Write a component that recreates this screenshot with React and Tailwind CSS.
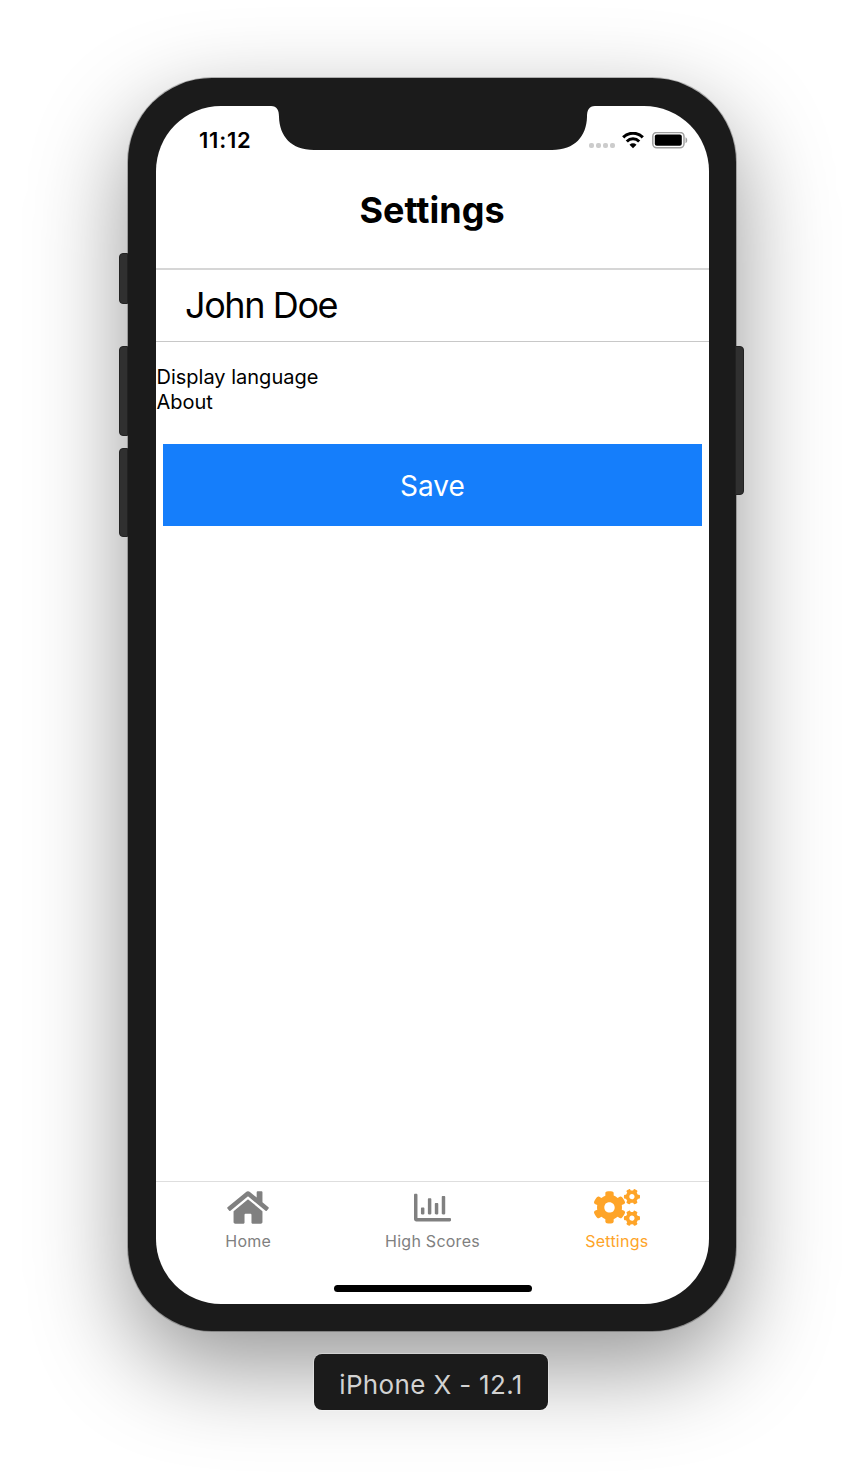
import { FaCogs, FaRegChartBar } from "react-icons/fa";

function HomeIcon({ className }) {
  return (
    <svg viewBox="0 0 576 512" fill="currentColor" className={className}>
      <path d="M488 312.7V456c0 13.3-10.7 24-24 24H348c-6.6 0-12-5.4-12-12V356c0-6.6-5.4-12-12-12h-72c-6.6 0-12 5.4-12 12v112c0 6.6-5.4 12-12 12H112c-13.3 0-24-10.7-24-24V312.7c0-3.6 1.6-7 4.4-9.3l188-154.8c4.4-3.6 10.8-3.6 15.3 0l188 154.8c2.7 2.3 4.3 5.7 4.3 9.3zm83.6-60.9L488 182.9V44.4c0-6.6-5.4-12-12-12h-56c-6.6 0-12 5.4-12 12V117l-89.5-73.7c-17.7-14.6-43.3-14.6-61 0L4.4 251.8c-5.1 4.2-5.8 11.8-1.6 16.9l25.5 31c4.2 5.1 11.8 5.8 16.9 1.6l235.2-193.7c4.4-3.6 10.8-3.6 15.3 0l235.2 193.7c5.1 4.2 12.7 3.5 16.9-1.6l25.5-31c4.2-5.2 3.4-12.7-1.7-16.9z" />
    </svg>
  );
}

function Notch() {
  return (
    <svg viewBox="0 0 324 45" className="absolute -top-px left-[115px] h-[45px] w-[324px]">
      <path
        fill="#1b1b1b"
        d="M0 0H324V1C318 1 316 5 316 12C315.500 31 304 45 281 45H43C20 45 8.500 31 8 12C8 5 6 1 0 1Z"
      />
    </svg>
  );
}

function StatusBar() {
  return (
    <div className="flex h-[68px] items-center justify-between pr-[21px] pl-[43px]">
      <span className="text-[22px] leading-none font-semibold tracking-[0.8px]">11:12</span>
      <div className="flex items-center">
        <div className="mt-[11px] flex gap-[2px]">
          <i className="size-[5px] rounded-[2px] bg-[#cccccc]" />
          <i className="size-[5px] rounded-[2px] bg-[#cccccc]" />
          <i className="size-[5px] rounded-[2px] bg-[#cccccc]" />
          <i className="size-[5px] rounded-[2px] bg-[#cccccc]" />
        </div>
        <svg viewBox="0 0 22 17" className="ml-[7px] h-[17px] w-[22px]" fill="none" stroke="#000">
          <path d="M1.200 5.400C6.600 -.1 15.400 -.1 20.800 5.400" strokeWidth="3.100" />
          <path d="M4.800 9.500C8.300 5.900 13.700 5.900 17.200 9.500" strokeWidth="3" />
          <path d="M11 16.200L7.500 12.700C9.600 10.900 12.400 10.900 14.500 12.700Z" fill="#000" stroke="none" />
        </svg>
        <svg viewBox="0 0 36 17" className="ml-[8px] h-[17px] w-[36px]" fill="none">
          <rect x=".8" y=".4" width="31.200" height="15.400" rx="4" stroke="#a0a0a0" strokeWidth="1.500" />
          <rect x="2.800" y="2.400" width="27" height="11.400" rx="2" fill="#000" />
          <path d="M33.500 5.200C35.800 6.200 35.800 10.200 33.500 11.200Z" fill="#a0a0a0" />
        </svg>
      </div>
    </div>
  );
}

function Tab({ icon, label, active }) {
  return (
    <div
      className={
        "flex flex-1 flex-col items-center pt-[7px] " + (active ? "text-[#fea428]" : "text-[#808080]")
      }
    >
      {icon}
      <span className="mt-[5px] text-[16px] leading-[20px] tracking-[0.25px]">{label}</span>
    </div>
  );
}

function SideButton({ className }) {
  return <div className={"absolute w-[9px] border border-[#222] bg-[#303030] " + className} />;
}

export default function App() {
  return (
    <div className="flex h-[1482px] w-[864px] flex-col items-center overflow-hidden bg-white pt-[78px] font-['Inter','Liberation_Sans',sans-serif] text-black">
      <div className="relative h-[1253px] w-[608px] rounded-[84px] bg-[#1b1b1b] py-[28px] pr-[27px] pl-[28px] shadow-[0_0_0_1px_rgba(0,0,0,0.25),0_35px_96px_rgba(0,0,0,0.42)]">
        <SideButton className="top-[175px] -left-[9px] h-[51px] rounded-l-[4px]" />
        <SideButton className="top-[268px] -left-[9px] h-[90px] rounded-l-[4px]" />
        <SideButton className="top-[370px] -left-[9px] h-[89px] rounded-l-[4px]" />
        <SideButton className="top-[268px] -right-[8px] h-[149px] rounded-r-[4px]" />
        <main className="relative flex h-[1198px] w-[553px] flex-col overflow-hidden rounded-[65px] bg-white">
          <Notch />
          <StatusBar />
          <h1 className="flex h-[96px] items-center justify-center border-b-2 border-[#d6d6d6] pr-px pb-[23px] text-[36px] font-bold">
            Settings
          </h1>
          <div className="flex h-[72px] items-center border-b border-[#c8c8c8] pb-px pl-[29px] text-[36px] tracking-[-1.4px]">
            John Doe
          </div>
          <div className="pt-[23px] pl-[0.5px] text-[20px] leading-[25px]">
            <p>Display language</p>
            <p>About</p>
          </div>
          <button className="mx-[7px] mt-[29px] flex h-[82px] items-center justify-center bg-[#157efb] pt-[2px] text-[28px] text-white">
            Save
          </button>
          <nav className="mt-auto flex h-[123px] border-t border-[#dedede]">
            <Tab icon={<HomeIcon className="h-[37px] w-[42px]" />} label="Home" />
            <Tab icon={<FaRegChartBar className="ml-px size-[37px]" />} label="High Scores" />
            <Tab icon={<FaCogs className="ml-px h-[37px] w-[46px]" />} label="Settings" active />
          </nav>
          <div className="absolute bottom-[12px] left-[178px] h-[7px] w-[198px] rounded-full bg-black" />
        </main>
      </div>
      <div className="relative mt-[23px] mr-[2px] flex h-[56px] w-[234px] items-center justify-center rounded-[8px] bg-[#1b1b1b] pt-[4px] text-[26px] tracking-[0.35px] text-[#d2d2d2] shadow-[0_0_0_1px_rgba(255,255,255,0.3)]">
        iPhone X - 12.1
      </div>
    </div>
  );
}
